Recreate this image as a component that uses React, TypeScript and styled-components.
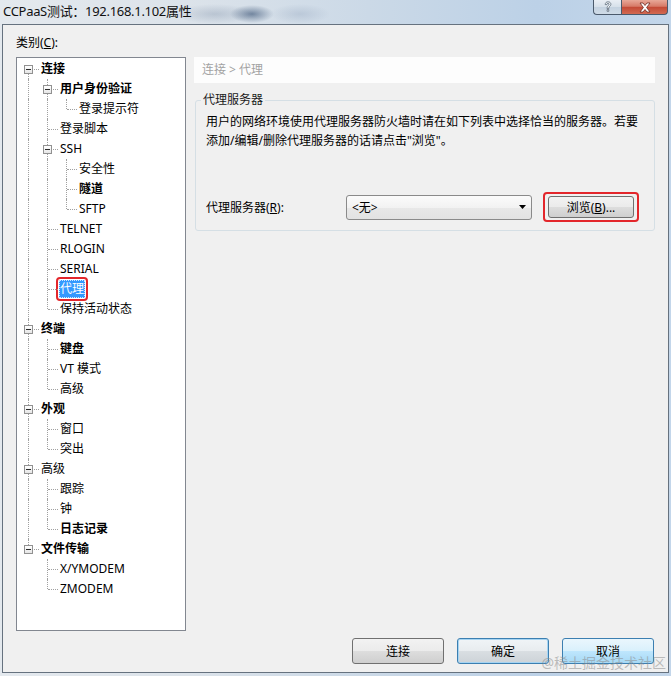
import React from "react";
import styled, { createGlobalStyle, css } from "styled-components";

const GlobalStyle = createGlobalStyle`
  html, body { margin: 0; padding: 0; }
  body {
    width: 671px;
    height: 676px;
    overflow: hidden;
    font-family: "Noto Sans", "Noto Sans CJK SC", sans-serif;
    font-size: 12px;
    color: #000;
  }
  * { box-sizing: border-box; }
`;

const Window = styled.div`
  position: relative;
  width: 671px;
  height: 676px;
  display: flex;
  flex-direction: column;
  overflow: hidden;
  background:
    radial-gradient(ellipse 22px 9px at 252px 14px, rgba(35, 62, 100, 0.55), rgba(35, 62, 100, 0) 100%),
    radial-gradient(ellipse 40px 10px at 215px 14px, rgba(90, 110, 140, 0.25), rgba(90, 110, 140, 0) 100%),
    radial-gradient(ellipse 30px 10px at 300px 14px, rgba(120, 140, 170, 0.25), rgba(120, 140, 170, 0) 100%),
    linear-gradient(90deg, #e4e9ee 0%, #dce3ea 28%, #cbd9e7 55%, #bcd1e7 80%, #c3d6ea 100%);
`;

const TitleBar = styled.div`
  height: 24px;
  display: flex;
  align-items: flex-start;
  padding-left: 3px;
  flex-shrink: 0;
`;

const Title = styled.div`
  font-size: 13px;
  line-height: 23px;
  color: #111;
  letter-spacing: -0.3px;
`;

const Caption = styled.div`
  margin-left: auto;
  margin-right: 3px;
  display: flex;
`;

const CapButton = styled.div<{ $kind: "help" | "close" }>`
  height: 15px;
  display: flex;
  align-items: center;
  justify-content: center;
  border: 1px solid #4b5a6c;
  border-top: none;
  ${(p) =>
    p.$kind === "help"
      ? css`
          width: 28px;
          border-right: none;
          border-bottom-left-radius: 4px;
          background: linear-gradient(#e9eef4 0%, #d6e0ea 50%, #c4d2e0 51%, #cfdbe7 100%);
        `
      : css`
          width: 47px;
          border-bottom-right-radius: 4px;
          background: linear-gradient(#e8a898 0%, #d77a68 45%, #c44a36 52%, #d26a52 100%);
        `}
`;

const Frame = styled.div`
  flex: 1;
  margin: 0 2px 3px 2px;
  border: 1px solid #66727f;
  background: #f0f0f0;
  display: flex;
  flex-direction: column;
  padding: 10px 13px 8px 13px;
`;

const CategoryLabel = styled.div`
  line-height: 16px;
  margin-bottom: 6px;
`;

const U = styled.span`
  text-decoration: underline;
  text-underline-offset: 1px;
`;

const Main = styled.div`
  display: flex;
  gap: 8px;
  height: 574px;
`;

const Tree = styled.div`
  width: 170px;
  flex-shrink: 0;
  border: 1px solid #828790;
  background: #fff;
  padding: 1px 0 0 2px;
  overflow: hidden;
`;

const Row = styled.div`
  height: 20px;
  display: flex;
  align-items: center;
  white-space: nowrap;
`;

const dotted = "1px dotted #a0a0a0";

const GuideCell = styled.span<{ $line: boolean }>`
  position: relative;
  width: 19px;
  height: 20px;
  flex-shrink: 0;
  ${(p) =>
    p.$line &&
    css`
      &::before {
        content: "";
        position: absolute;
        left: 9px;
        top: 0;
        bottom: 0;
        border-left: ${dotted};
      }
    `}
`;

const ConnectorCell = styled.span<{ $kind: "full" | "up" | "down" }>`
  position: relative;
  width: 19px;
  height: 20px;
  flex-shrink: 0;
  &::before {
    content: "";
    position: absolute;
    left: 9px;
    top: ${(p) => (p.$kind === "down" ? "10px" : "0")};
    bottom: ${(p) => (p.$kind === "up" ? "10px" : "0")};
    border-left: ${dotted};
  }
  &::after {
    content: "";
    position: absolute;
    left: 10px;
    right: -1px;
    top: 10px;
    border-top: ${dotted};
  }
`;

const Expander = styled.span`
  position: absolute;
  left: 5px;
  top: 6px;
  width: 9px;
  height: 9px;
  border: 1px solid #919191;
  background: linear-gradient(#ffffff, #e6e6e6);
  z-index: 1;
  &::after {
    content: "";
    position: absolute;
    left: 1px;
    top: 3px;
    width: 5px;
    height: 1px;
    background: #2b2b2b;
  }
`;

const ItemLabel = styled.span<{ $bold?: boolean }>`
  margin-left: 3px;
  line-height: 20px;
  font-weight: ${(p) => (p.$bold ? 700 : 400)};
`;

const SelectedFrame = styled.span`
  margin-left: -1px;
  display: inline-flex;
  border: 2px solid #e3262b;
  border-radius: 4px;
  padding: 1px;
`;

const SelectedText = styled.span`
  background: #3399ff;
  color: #fff;
  padding: 0 1px;
  line-height: 18px;
  outline: 1px dotted #cfe6ff;
  outline-offset: -1px;
`;

const Right = styled.div`
  flex: 1;
  display: flex;
  flex-direction: column;
`;

const Breadcrumb = styled.div`
  height: 26px;
  line-height: 26px;
  background: #fdfdfd;
  padding-left: 8px;
  color: #a2a2a2;
`;

const Group = styled.fieldset`
  margin: 9px 0 0 1px;
  border: 1px solid #d5dfe5;
  border-radius: 3px;
  padding: 0 10px 8px 10px;
  min-width: 0;
`;

const Legend = styled.legend`
  padding: 0 2px;
  margin-left: -5px;
  line-height: 16px;
  color: #1a1a1a;
`;

const Description = styled.div`
  padding-top: 4px;
  line-height: 19px;
  white-space: nowrap;
`;

const FormRow = styled.div`
  margin-top: 42px;
  height: 30px;
  display: flex;
  align-items: center;
`;

const FieldLabel = styled.span`
  width: 140px;
  flex-shrink: 0;
`;

const Combo = styled.div`
  width: 186px;
  height: 25px;
  border: 1px solid #8a8a8a;
  border-radius: 3px;
  background: linear-gradient(#fbfbfb 0%, #f2f2f2 50%, #e8e8e8 51%, #e2e2e2 100%);
  display: flex;
  align-items: center;
  padding: 0 5px 0 5px;
`;

const ComboText = styled.span`
  flex: 1;
`;

const Highlight = styled.div`
  margin-left: 11px;
  width: 96px;
  height: 30px;
  border: 2px solid #e3262b;
  border-radius: 4px;
  padding: 2px 3px;
  display: flex;
`;

const buttonBase = css`
  border: 1px solid #707070;
  border-radius: 3px;
  background: linear-gradient(#f2f2f2 0%, #ebebeb 50%, #dddddd 51%, #cfcfcf 100%);
  display: flex;
  align-items: center;
  justify-content: center;
  font-family: inherit;
  font-size: 12px;
  color: #000;
`;

const BrowseButton = styled.div`
  ${buttonBase};
  flex: 1;
`;

const ButtonRow = styled.div`
  margin-top: 7px;
  display: flex;
  justify-content: flex-end;
  gap: 13px;
  padding-right: 1px;
`;

const DialogButton = styled.div<{ $variant?: "default" | "hover" }>`
  ${buttonBase};
  width: 92px;
  height: 26px;
  ${(p) =>
    p.$variant === "default" &&
    css`
      border-color: #3c7fb1;
      box-shadow: inset 0 0 0 1px #a6d4f2;
      background: linear-gradient(#f0f4f7 0%, #e8ecef 50%, #d9dee2 51%, #cdd3d8 100%);
    `}
  ${(p) =>
    p.$variant === "hover" &&
    css`
      border-color: #3c7fb1;
      background: linear-gradient(#eaf6fd 0%, #d9f0fc 50%, #bee6fd 51%, #a7d9f5 100%);
    `}
`;

const Watermark = styled.div`
  position: absolute;
  right: 5px;
  bottom: 5px;
  font-size: 14px;
  line-height: 16px;
  color: rgba(140, 140, 140, 0.55);
  white-space: nowrap;
`;

type Node = { label: string; bold?: boolean; selected?: boolean; children?: Node[] };

const tree: Node[] = [
  {
    label: "连接",
    bold: true,
    children: [
      { label: "用户身份验证", bold: true, children: [{ label: "登录提示符" }] },
      { label: "登录脚本" },
      {
        label: "SSH",
        children: [{ label: "安全性" }, { label: "隧道", bold: true }, { label: "SFTP" }],
      },
      { label: "TELNET" },
      { label: "RLOGIN" },
      { label: "SERIAL" },
      { label: "代理", selected: true },
      { label: "保持活动状态" },
    ],
  },
  {
    label: "终端",
    bold: true,
    children: [{ label: "键盘", bold: true }, { label: "VT 模式" }, { label: "高级" }],
  },
  { label: "外观", bold: true, children: [{ label: "窗口" }, { label: "突出" }] },
  {
    label: "高级",
    children: [{ label: "跟踪" }, { label: "钟" }, { label: "日志记录", bold: true }],
  },
  {
    label: "文件传输",
    bold: true,
    children: [{ label: "X/YMODEM" }, { label: "ZMODEM" }],
  },
];

type FlatRow = {
  node: Node;
  guides: boolean[];
  kind: "full" | "up" | "down";
};

function flatten(nodes: Node[], guides: boolean[], isRootLevel: boolean): FlatRow[] {
  const out: FlatRow[] = [];
  nodes.forEach((node, i) => {
    const isLast = i === nodes.length - 1;
    const kind: FlatRow["kind"] = isRootLevel && i === 0 ? "down" : isLast ? "up" : "full";
    out.push({ node, guides, kind });
    if (node.children) {
      out.push(...flatten(node.children, [...guides, !isLast], false));
    }
  });
  return out;
}

const rows = flatten(tree, [], true);

const CloseGlyph = () => (
  <svg width="14" height="11" viewBox="0 0 14 11">
    <path
      d="M2 1 L5 1 L7 3.5 L9 1 L12 1 L8.6 5.5 L12 10 L9 10 L7 7.5 L5 10 L2 10 L5.4 5.5 Z"
      fill="#fff"
      stroke="#6b2a22"
      strokeWidth="0.8"
      strokeLinejoin="round"
    />
  </svg>
);

const HelpGlyph = () => (
  <svg width="10" height="12" viewBox="0 0 10 12">
    <path
      d="M2.2 3.6 C2.2 1.6 3.6 0.8 5 0.8 C6.8 0.8 7.9 1.9 7.9 3.3 C7.9 5 6 5.3 5.8 6.9 L5.8 7.6 L4.1 7.6 L4.1 6.7 C4.3 4.6 6.1 4.4 6.1 3.3 C6.1 2.6 5.6 2.2 5 2.2 C4.3 2.2 3.9 2.7 3.9 3.6 Z M4.1 8.6 L5.8 8.6 L5.8 10.3 L4.1 10.3 Z"
      fill="#f4f7fa"
      stroke="#4d5b6b"
      strokeWidth="0.7"
    />
  </svg>
);

const ComboArrow = () => (
  <svg width="7" height="4" viewBox="0 0 7 4">
    <path d="M0 0 L7 0 L3.5 4 Z" fill="#000" />
  </svg>
);

export default function App() {
  return (
    <>
      <GlobalStyle />
      <Window>
        <TitleBar>
          <Title>CCPaaS测试：192.168.1.102属性</Title>
          <Caption>
            <CapButton $kind="help">
              <HelpGlyph />
            </CapButton>
            <CapButton $kind="close">
              <CloseGlyph />
            </CapButton>
          </Caption>
        </TitleBar>
        <Frame>
          <CategoryLabel>
            类别(<U>C</U>):
          </CategoryLabel>
          <Main>
            <Tree>
              {rows.map((r, idx) => (
                <Row key={idx}>
                  {r.guides.map((g, gi) => (
                    <GuideCell key={gi} $line={g} />
                  ))}
                  <ConnectorCell $kind={r.kind}>{r.node.children && <Expander />}</ConnectorCell>
                  {r.node.selected ? (
                    <SelectedFrame>
                      <SelectedText>{r.node.label}</SelectedText>
                    </SelectedFrame>
                  ) : (
                    <ItemLabel $bold={r.node.bold}>{r.node.label}</ItemLabel>
                  )}
                </Row>
              ))}
            </Tree>
            <Right>
              <Breadcrumb>连接 &gt; 代理</Breadcrumb>
              <Group>
                <Legend>代理服务器</Legend>
                <Description>
                  用户的网络环境使用代理服务器防火墙时请在如下列表中选择恰当的服务器。若要
                  <br />
                  添加/编辑/删除代理服务器的话请点击"浏览"。
                </Description>
                <FormRow>
                  <FieldLabel>
                    代理服务器(<U>R</U>):
                  </FieldLabel>
                  <Combo>
                    <ComboText>&lt;无&gt;</ComboText>
                    <ComboArrow />
                  </Combo>
                  <Highlight>
                    <BrowseButton>
                      浏览(<U>B</U>)...
                    </BrowseButton>
                  </Highlight>
                </FormRow>
              </Group>
            </Right>
          </Main>
          <ButtonRow>
            <DialogButton>连接</DialogButton>
            <DialogButton $variant="default">确定</DialogButton>
            <DialogButton $variant="hover">取消</DialogButton>
          </ButtonRow>
        </Frame>
        <Watermark>@稀土掘金技术社区</Watermark>
      </Window>
    </>
  );
}
